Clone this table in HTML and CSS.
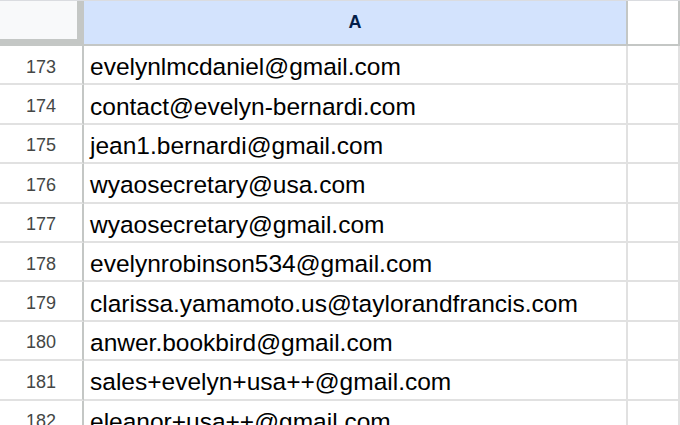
FILE: index.html
```html
<!DOCTYPE html>
<html lang="en">
<head>
  <meta charset="UTF-8" />
  <title>Sheet</title>
  <link rel="stylesheet" href="styles.css">
</head>
<body>
  <div class="sheet">
    <div class="corner"></div>
    <div class="col-head selected">A</div>
    <div class="col-head"></div>

    <div class="row-head">173</div><div class="cell">evelynlmcdaniel@gmail.com</div><div class="cell"></div>
    <div class="row-head">174</div><div class="cell">contact@evelyn-bernardi.com</div><div class="cell"></div>
    <div class="row-head">175</div><div class="cell">jean1.bernardi@gmail.com</div><div class="cell"></div>
    <div class="row-head">176</div><div class="cell">wyaosecretary@usa.com</div><div class="cell"></div>
    <div class="row-head">177</div><div class="cell">wyaosecretary@gmail.com</div><div class="cell"></div>
    <div class="row-head">178</div><div class="cell">evelynrobinson534@gmail.com</div><div class="cell"></div>
    <div class="row-head">179</div><div class="cell">clarissa.yamamoto.us@taylorandfrancis.com</div><div class="cell"></div>
    <div class="row-head">180</div><div class="cell">anwer.bookbird@gmail.com</div><div class="cell"></div>
    <div class="row-head">181</div><div class="cell">sales+evelyn+usa++@gmail.com</div><div class="cell"></div>
    <div class="row-head">182</div><div class="cell">eleanor+usa++@gmail.com</div><div class="cell"></div>
  </div>
</body>
</html>
```

FILE: styles.css
```css
body {
  margin: 0;
  background: #ffffff;
  font-family: "Liberation Sans", Arial, sans-serif;
  overflow: hidden;
}

.sheet {
  display: grid;
  grid-template-columns: 84px 544px 1fr;
  grid-template-rows: 45px repeat(10, 39.4px);
  width: 680px;
  height: 425px;
  border-top: 1px solid #dadce0;
  box-sizing: border-box;
  overflow: hidden;
}

.corner {
  background: #f8f9fa;
  border-right: 7px solid #c4c7c5;
  border-bottom: 7px solid #c4c7c5;
}

.col-head {
  display: flex;
  align-items: center;
  justify-content: center;
  border-right: 2px solid #c4c7c5;
  border-bottom: 2px solid #c4c7c5;
  background: #ffffff;
  font-size: 18px;
  font-weight: bold;
  color: #041e49;
}

.col-head.selected {
  background: #d3e3fd;
}

.row-head {
  display: flex;
  align-items: center;
  justify-content: center;
  padding-top: 5px;
  border-right: 2px solid #c4c7c5;
  border-bottom: 2px solid #e1e1e1;
  font-size: 18px;
  color: #444746;
}

.cell {
  display: flex;
  align-items: center;
  padding: 5px 0 0 6px;
  border-right: 2px solid #e1e1e1;
  border-bottom: 2px solid #e1e1e1;
  font-size: 24.5px;
  color: #000000;
  white-space: nowrap;
  overflow: hidden;
}
```
